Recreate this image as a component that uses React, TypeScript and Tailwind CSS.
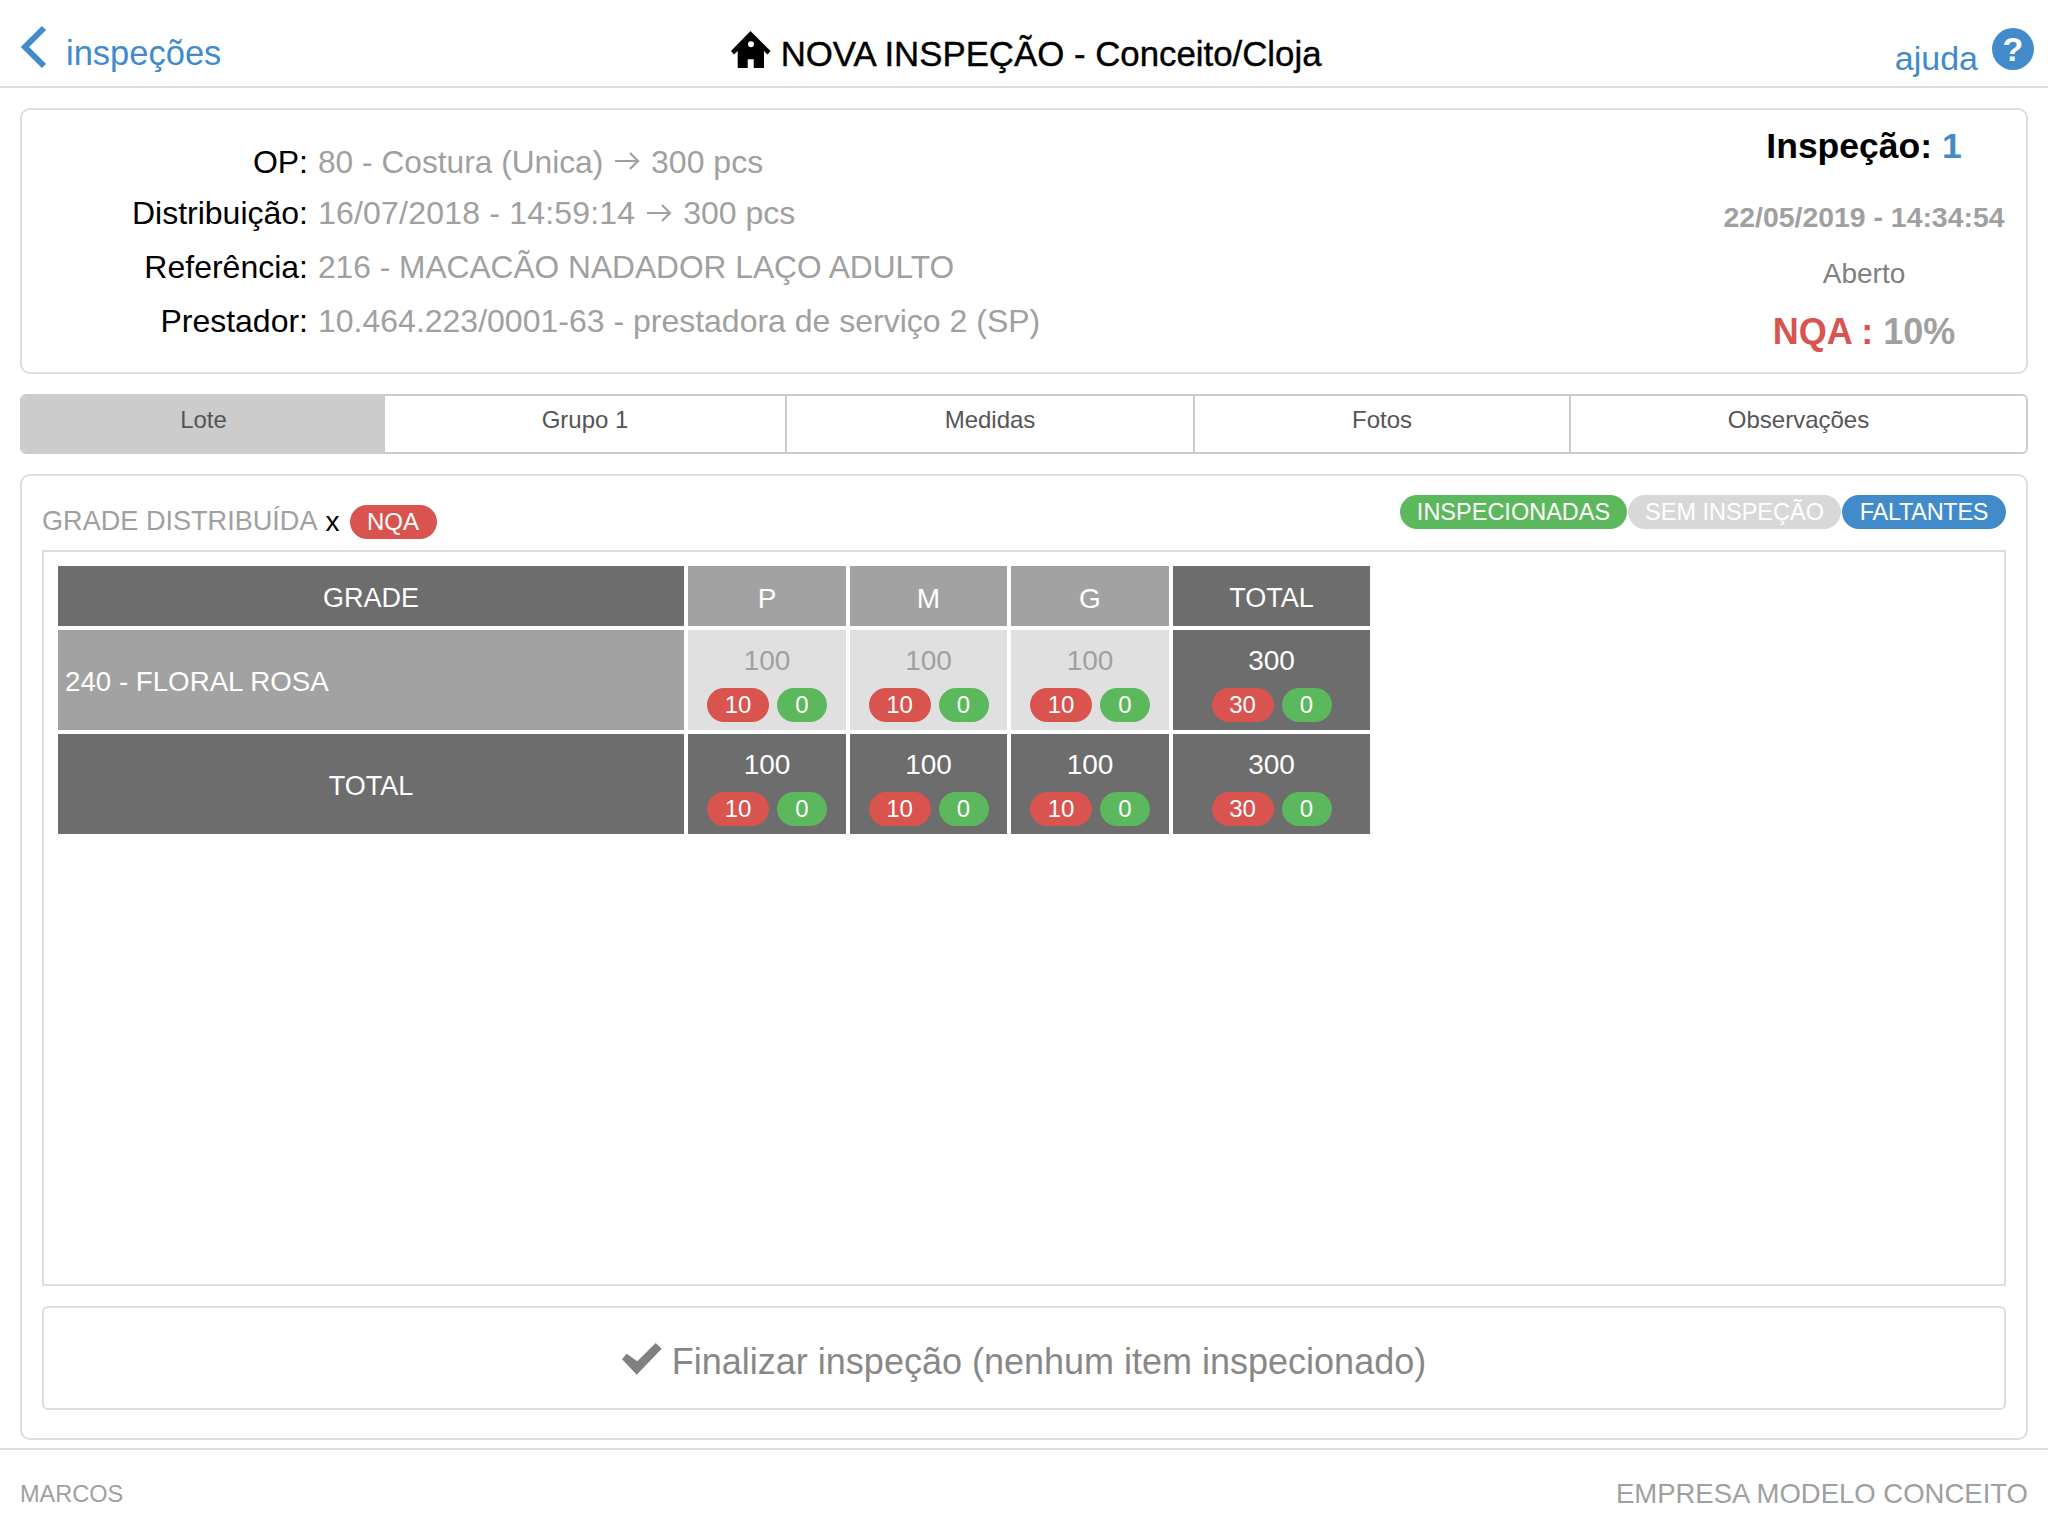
const sans = "font-['Liberation_Sans',Arial,sans-serif]";

function HomeIcon() {
  return (
    <svg width="40" height="37" viewBox="0 0 40 37" className="shrink-0">
      <path
        fill="#000"
        fillRule="evenodd"
        d="M19.5 0 L39.5 20 L36.5 23.5 L33 20 V37 H22.7 V28.3 H16.7 V37 H6.7 V20 L3 23.5 L0 20 Z M20 10.3 A3 3 0 1 0 20 16.3 A3 3 0 1 0 20 10.3 Z"
      />
    </svg>
  );
}

function Arrow() {
  return (
    <svg width="30" height="20" viewBox="0 0 30 20" fill="none" stroke="#a0a0a0" strokeWidth="2.2" className="mb-[6px] inline-block align-middle">
      <path d="M3 10 H26 M18 2 L26 10 L18 18" />
    </svg>
  );
}

function Counts({ nqa, ok }: { nqa: number; ok: number }) {
  return (
    <div className="flex justify-center gap-2">
      <span className="flex h-[34px] w-[62px] items-center justify-center rounded-[17px] bg-[#d9534f] text-2xl leading-none text-white">{nqa}</span>
      <span className="flex h-[34px] w-[50px] items-center justify-center rounded-[17px] bg-[#5cb85c] text-2xl leading-none text-white">{ok}</span>
    </div>
  );
}

function Cell({ total, nqa, light }: { total: number; nqa: number; light?: boolean }) {
  return (
    <div className={`flex flex-col items-center pt-[13px] ${light ? "bg-[#e0e0e0] text-[#a0a0a0]" : "bg-[#6d6d6d] text-white"}`}>
      <span className="mb-[9px] text-[28px] leading-[36px]">{total}</span>
      <Counts nqa={nqa} ok={0} />
    </div>
  );
}

function InfoRow({ label, children }: { label: string; children: React.ReactNode }) {
  return (
    <div className="flex h-[54px] items-center">
      <span className="w-[296px] pr-[10px] text-right text-black">{label}</span>
      <span className="text-[#a0a0a0]">{children}</span>
    </div>
  );
}

const tabs = [
  { name: "Lote", w: "w-[363px]", active: true },
  { name: "Grupo 1", w: "w-[402px]" },
  { name: "Medidas", w: "w-[408px]" },
  { name: "Fotos", w: "w-[376px]" },
  { name: "Observações", w: "flex-1" },
];

export default function App() {
  return (
    <div className={`flex h-[1536px] w-[2048px] flex-col bg-white ${sans}`}>
      <header className="relative flex h-[88px] shrink-0 border-b-2 border-[#dddddd]">
        <div className="ml-5 flex items-center gap-[18px] pt-[22px] text-[34.5px] text-[#428bca]">
          <svg width="28" height="46" viewBox="0 0 28 46" fill="none" stroke="#428bca" strokeWidth="6" className="mb-[14px]">
            <path d="M24 4 L5 23 L24 42" />
          </svg>
          <span>inspeções</span>
        </div>
        <div className="flex flex-1 items-center justify-center gap-[10px] pt-[22px] pr-[64px] text-[34.8px] text-black [-webkit-text-stroke:0.4px_black]">
          <div className="mb-[10px]"><HomeIcon /></div>
          <span>NOVA INSPEÇÃO - Conceito/Cloja</span>
        </div>
        <div className="mr-[14px] flex items-start pt-7 text-[34px] text-[#428bca]">
          <span className="mt-2 mr-[14px] leading-[44px]">ajuda</span>
          <svg width="42" height="42" viewBox="0 0 42 42">
            <circle cx="21" cy="21" r="21" fill="#428bca" />
            <text x="21" y="33" textAnchor="middle" fontSize="34" fontWeight="700" fill="#fff" fontFamily="Liberation Sans">?</text>
          </svg>
        </div>
      </header>

      <main className="flex flex-1 flex-col px-5 pt-5">
        <section className="flex h-[266px] shrink-0 justify-between rounded-[10px] border-2 border-[#dddddd] pt-[6px] text-[32px] leading-none">
          <div className="pt-[16px]">
            <div className="pt-[3px] -mb-[3px]">
              <InfoRow label="OP:"><span className="text-[31.7px]">80 - Costura (Unica)</span> <Arrow /> 300 pcs</InfoRow>
            </div>
            <InfoRow label="Distribuição:"><span className="tracking-[0.2px]">16/07/2018 - 14:59:14</span> <Arrow /> 300 pcs</InfoRow>
            <InfoRow label="Referência:"><span className="text-[31.7px]">216 - MACACÃO NADADOR LAÇO ADULTO</span></InfoRow>
            <InfoRow label="Prestador:">10.464.223/0001-63 - prestadora de serviço 2 (SP)</InfoRow>
          </div>
          <div className="flex w-[324px] flex-col items-center">
            <div className="mt-[12px] h-[36px] text-[35.5px] leading-[36px] font-bold text-black">
              Inspeção: <span className="text-[#428bca]">1</span>
            </div>
            <div className="mt-[37px] text-[28.4px] leading-[32px] font-bold text-[#a0a0a0]">22/05/2019 - 14:34:54</div>
            <div className="mt-[25px] text-[28px] leading-[32px] text-[#808080]">Aberto</div>
            <div className="mt-[22px] text-[36px] leading-[40px] font-bold text-[#a0a0a0]">
              <span className="text-[#d9534f]">NQA :</span> 10%
            </div>
          </div>
        </section>

        <nav className="mt-5 flex h-[60px] shrink-0 overflow-hidden rounded-md border-2 border-[#cccccc] text-2xl text-[#555555]">
          {tabs.map((t, i) => (
            <div
              key={t.name}
              className={`flex items-center justify-center pb-[8px] ${t.w} ${t.active ? "bg-[#cccccc]" : "bg-white"} ${i > 0 && i < 4 ? "border-r-2 border-[#cccccc]" : ""}`}
            >
              {t.name}
            </div>
          ))}
        </nav>

        <section className="mt-5 flex h-[966px] shrink-0 flex-col rounded-[10px] border-2 border-[#dddddd] px-5">
          <div className="flex h-[74px] shrink-0 justify-between">
            <div className="flex items-center gap-2 pt-[17px] text-[27.1px] text-[#a0a0a0]">
              <span>GRADE DISTRIBUÍDA</span>
              <span className="mr-[2px] text-[28px] text-black">x</span>
              <span className="flex h-[34px] w-[87px] items-center justify-center rounded-[17px] bg-[#d9534f] text-2xl text-white">NQA</span>
            </div>
            <div className="flex items-start gap-px pt-[19px] text-[23.5px] text-white">
              <span className="flex h-[34px] w-[227px] items-center justify-center rounded-[17px] bg-[#5cb85c] pt-px">INSPECIONADAS</span>
              <span className="flex h-[34px] w-[213px] items-center justify-center rounded-[17px] bg-[#d8d8d8] pt-px">SEM INSPEÇÃO</span>
              <span className="flex h-[34px] w-[164px] items-center justify-center rounded-[17px] bg-[#428bca] pt-px tracking-[-0.3px]">FALTANTES</span>
            </div>
          </div>

          <div className="h-[736px] shrink-0 border-2 border-[#dddddd] px-[14px] pt-[14px]">
            <div className="grid w-[1312px] grid-cols-[626px_158px_157px_158px_197px] grid-rows-[60px_100px_100px] gap-1 text-[28px]">
              <div className="flex items-center justify-center bg-[#6d6d6d] pt-[5px] text-[27px] text-white">GRADE</div>
              {["P", "M", "G"].map((s) => (
                <div key={s} className="flex items-center justify-center bg-[#a2a2a2] pt-[6px] text-white">{s}</div>
              ))}
              <div className="flex items-center justify-center bg-[#6d6d6d] pt-[5px] text-[27px] text-white">TOTAL</div>

              <div className="flex items-center bg-[#a2a2a2] pt-[4px] pl-[7px] text-[27.7px] text-white">240 - FLORAL ROSA</div>
              <Cell total={100} nqa={10} light />
              <Cell total={100} nqa={10} light />
              <Cell total={100} nqa={10} light />
              <Cell total={300} nqa={30} />

              <div className="flex items-center justify-center bg-[#6d6d6d] pt-[4px] text-[27px] text-white">TOTAL</div>
              <Cell total={100} nqa={10} />
              <Cell total={100} nqa={10} />
              <Cell total={100} nqa={10} />
              <Cell total={300} nqa={30} />
            </div>
          </div>

          <button className="mt-5 flex h-[104px] shrink-0 items-center justify-center gap-[10px] rounded-md border-2 border-[#dddddd] pt-[8px] text-[36px] text-[#888888]">
            <svg width="40" height="32" viewBox="0 0 40 32" className="mb-[6px]">
              <path fill="#808080" d="M4.7 10.7 L0 16.3 L14.7 31.7 L39.7 5.7 L33.7 0 L15.3 18.3 Z" />
            </svg>
            <span>Finalizar inspeção (nenhum item inspecionado)</span>
          </button>
        </section>
      </main>

      <footer className="mt-[6px] flex h-[88px] shrink-0 items-start justify-between border-t-2 border-[#dddddd] px-5 pt-[28px] text-[#a0a0a0]">
        <span className="text-[23.5px] leading-[32px]">MARCOS</span>
        <span className="text-[27.5px] leading-[32px]">EMPRESA MODELO CONCEITO</span>
      </footer>
    </div>
  );
}
